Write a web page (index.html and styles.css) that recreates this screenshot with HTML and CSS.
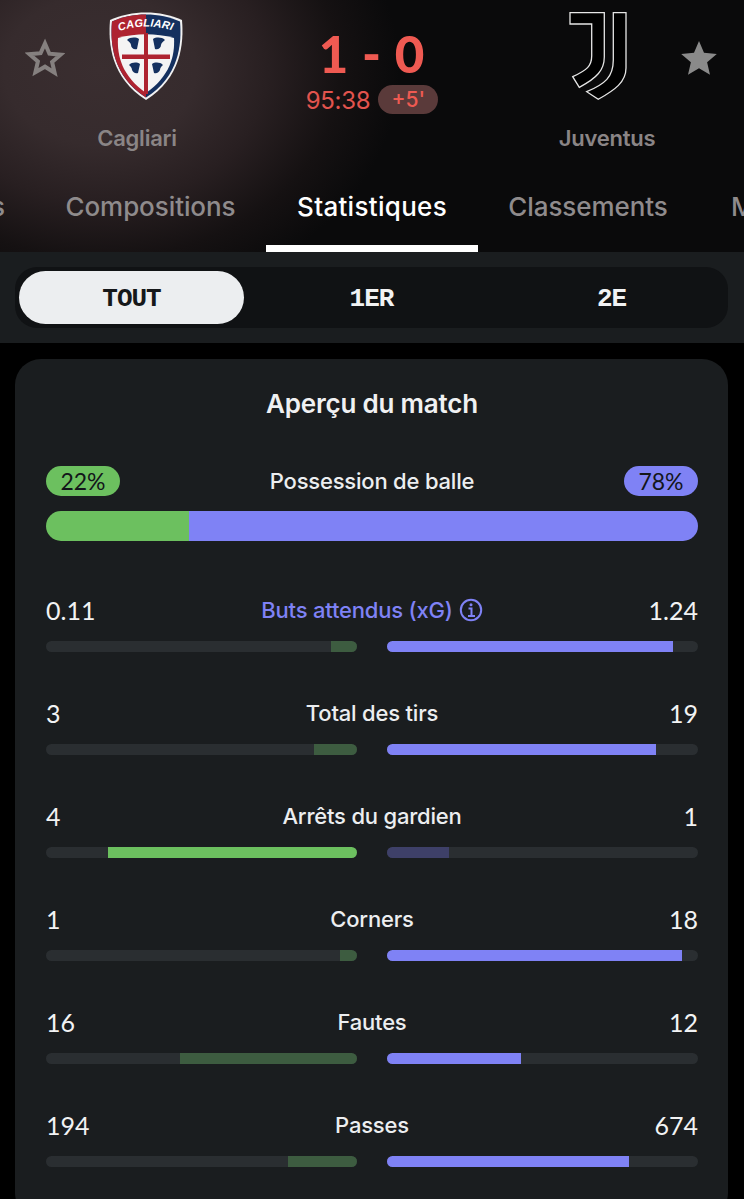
FILE: index.html
```html
<!DOCTYPE html>
<html lang="fr">
<head>
<meta charset="utf-8">
<title>Cagliari - Juventus</title>
<link rel="stylesheet" href="styles.css">
</head>
<body>
<header class="match">
  <div class="teams">
    <svg class="star star-off" viewBox="0 0 40 40"><path d="M20 5.500l4.400 10.200 11.100 1-8.400 7.300 2.500 10.800L20 28.700l-9.600 5.600 2.500-10.800-8.400-7.300 11.100-1z"/></svg>
    <div class="team">
      <svg class="crest" viewBox="-19 0 94 88">
        <defs>
          <clipPath id="lh"><rect x="0" y="0" width="37" height="88"/></clipPath>
          <path id="arc" d="M10 19 Q37 10 65 19"/>
        </defs>
        <path d="M1 8C12 3 24 .5 37 .5S62 3 73 8c2 24-1 58-36 80C2 66-1 32 1 8z" fill="#f2f2f2"/>
        <path d="M3 9.500C13 5 25 2.500 37 2.500S61 5 71 9.500c2 23-1 55-34 76C4 64.500 1 32.500 3 9.500z" fill="#14305f"/>
        <path d="M3 9.500C13 5 25 2.500 37 2.500S61 5 71 9.500c2 23-1 55-34 76C4 64.500 1 32.500 3 9.500z" fill="#ae2330" clip-path="url(#lh)"/>
        <path d="M9 26c18-5 38-5 56 0 1 18-4 38-28 55C13 64 8 44 9 26z" fill="#f4f4f4"/>
        <path d="M35 21h4v61h-4z" fill="#ae2330"/>
        <path d="M13 42.500h48v4.500H13z" fill="#ae2330"/>
        <g fill="#14305f">
          <path d="M18 28c3-3 9-3 12-1l-2 10c-3 1-6-1-6-4 0-2-2-3-4-5z"/>
          <path d="M56 28c-3-3-9-3-12-1l2 10c3 1 6-1 6-4 0-2 2-3 4-5z"/>
          <path d="M20 53c3-3 8-3 11-1l-2 9c-3 1-5-1-6-3 0-2-1-3-3-5z"/>
          <path d="M54 53c-3-3-8-3-11-1l2 9c3 1 5-1 6-3 0-2 1-3 3-5z"/>
        </g>
        <text class="crest-text"><textPath href="#arc" textLength="54">CAGLIARI</textPath></text>
      </svg>
      <span class="team-name">Cagliari</span>
    </div>
    <div class="score">
      <div class="score-main">1 - 0</div>
      <div class="clock"><span class="time">95:38</span><span class="added">+5'</span></div>
    </div>
    <div class="team">
      <svg class="crest" viewBox="0 0 94 88">
        <g fill="#000" stroke="#e6e6e6" stroke-width="1.300">
          <path d="M10 .7H44.300V45C44.300 58 37 66 19.300 75.300L12.700 64.700C27 58 31.700 54 31.700 44V12H10z"/>
          <path d="M53.300 .7H66V56C66 70 55 78 38.300 87.300L26.700 79.700C45 72 53.300 65 53.300 48z"/>
        </g>
      </svg>
      <span class="team-name">Juventus</span>
    </div>
    <svg class="star star-on" viewBox="0 0 40 40"><path d="M20 3l5 11.800 12.800 1.100-9.700 8.400 2.900 12.500L20 30.200 9 36.800l2.900-12.500-9.700-8.400L15 14.800z"/></svg>
  </div>
  <nav class="tabs">
    <span class="tab tab-first">Détails</span>
    <span class="tab">Compositions</span>
    <span class="tab tab-active">Statistiques</span>
    <span class="tab">Classements</span>
    <span class="tab tab-last">Médias</span>
  </nav>
</header>

<section class="periods">
  <div class="track">
    <span class="period period-active">TOUT</span>
    <span class="period">1ER</span>
    <span class="period">2E</span>
  </div>
</section>

<main class="card">
  <h2 class="card-title">Aperçu du match</h2>

  <div class="possession">
    <div class="poss-head">
      <span class="pill pill-green">22%</span>
      <span class="label">Possession de balle</span>
      <span class="pill pill-blue">78%</span>
    </div>
    <div class="poss-bar">
      <div class="poss-home" style="width:22%"></div>
      <div class="poss-away"></div>
    </div>
  </div>

  <div class="stat">
    <div class="stat-head"><span class="val">0.11</span><span class="label label-xg">Buts attendus (xG) <svg class="info" viewBox="0 0 24 24"><circle cx="12" cy="12" r="10.200"/><path d="M9.500 10.500H12.500V18M9 18H16" /><circle class="dot" cx="12" cy="6.800" r="1.500"/></svg></span><span class="val val-r">1.24</span></div>
    <div class="bars">
      <div class="bar bar-l"><i class="fill green dim" style="width:8.4%"></i></div>
      <div class="bar"><i class="fill blue" style="width:92%"></i></div>
    </div>
  </div>

  <div class="stat">
    <div class="stat-head"><span class="val">3</span><span class="label">Total des tirs</span><span class="val val-r">19</span></div>
    <div class="bars">
      <div class="bar bar-l"><i class="fill green dim" style="width:13.8%"></i></div>
      <div class="bar"><i class="fill blue" style="width:86.5%"></i></div>
    </div>
  </div>

  <div class="stat">
    <div class="stat-head"><span class="val">4</span><span class="label">Arrêts du gardien</span><span class="val val-r">1</span></div>
    <div class="bars">
      <div class="bar bar-l"><i class="fill green" style="width:80%"></i></div>
      <div class="bar"><i class="fill blue dim" style="width:20%"></i></div>
    </div>
  </div>

  <div class="stat">
    <div class="stat-head"><span class="val">1</span><span class="label">Corners</span><span class="val val-r">18</span></div>
    <div class="bars">
      <div class="bar bar-l"><i class="fill green dim" style="width:5.5%"></i></div>
      <div class="bar"><i class="fill blue" style="width:94.9%"></i></div>
    </div>
  </div>

  <div class="stat">
    <div class="stat-head"><span class="val">16</span><span class="label">Fautes</span><span class="val val-r">12</span></div>
    <div class="bars">
      <div class="bar bar-l"><i class="fill green dim" style="width:57%"></i></div>
      <div class="bar"><i class="fill blue" style="width:43%"></i></div>
    </div>
  </div>

  <div class="stat">
    <div class="stat-head"><span class="val">194</span><span class="label">Passes</span><span class="val val-r">674</span></div>
    <div class="bars">
      <div class="bar bar-l"><i class="fill green dim" style="width:22.2%"></i></div>
      <div class="bar"><i class="fill blue" style="width:77.8%"></i></div>
    </div>
  </div>
</main>
</body>
</html>
```

FILE: styles.css
```css
* { box-sizing: border-box; }
html, body { margin: 0; height: 1199px; overflow: hidden; background: #000; }
body { font-family: Inter, "Liberation Sans", sans-serif; color: #eceef0; }

.match {
  height: 252px;
  padding-top: 12px;
  display: flex;
  flex-direction: column;
  overflow: hidden;
  background: radial-gradient(ellipse 300px 235px at 100px 70px, #3a2e30 0%, #362b2d 32%, #281f21 56%, #151112 80%, rgba(10,10,11,0) 100%), #0a0a0b;
}
.teams {
  display: grid;
  grid-template-columns: 90px 94px 1fr 94px 90px;
  align-items: start;
  height: 166px;
  flex: none;
}
.star { width: 40px; height: 40px; justify-self: center; margin-top: 26px; }
.star-off path { fill: none; stroke: #85807f; stroke-width: 4; }
.star-on path { fill: #8a8a8a; }
.team { display: flex; flex-direction: column; align-items: center; }
.crest { width: 94px; height: 88px; display: block; }
.crest-text { font: italic 700 11px "Liberation Sans", sans-serif; fill: #fff; }
.team-name { margin-top: 22px; font-size: 22px; font-weight: 600; line-height: 32px; color: #8a8586; letter-spacing: -.25px; white-space: nowrap; }
.score { display: flex; flex-direction: column; align-items: center; }
.score-main { margin: 12px 0 0; font-family: Lato, sans-serif; font-size: 51px; font-weight: 900; line-height: 60px; color: #ef5a52; letter-spacing: .8px; }
.clock { display: flex; align-items: flex-start; gap: 8px; }
.time { padding-top: 2px; font-size: 24px; line-height: 30px; color: #e2544e; letter-spacing: -.3px; }
.added { width: 60px; height: 29px; margin-top: 1px; border-radius: 15px; background: #5a3a3a; color: #ee5a52; font-size: 21px; font-weight: 500; line-height: 29px; text-align: center; }

.tabs {
  display: grid;
  grid-template-columns: 145px 231px 212px 220px 145px;
  flex: 1;
  margin-left: -110px;
  white-space: nowrap;
}
.tab { font-size: 26px; font-weight: 500; line-height: 58px; color: #8f8b8c; text-align: center; letter-spacing: -.08px; }
.tab-first { text-align: right; padding-right: 30px; }
.tab-last { text-align: left; padding-left: 33px; }
.tab-active { color: #fff; letter-spacing: .3px; border-bottom: 7px solid #fff; }

.periods { height: 91px; background: #1a1d1f; padding: 15px 16px 0 15px; }
.track { display: grid; grid-template-columns: repeat(3, 225px); gap: 15px; height: 61px; padding: 4px; border-radius: 22px; background: #101214; }
.period { font-family: "Liberation Mono", monospace; font-size: 26px; font-weight: 700; line-height: 57px; height: 53px; text-align: center; color: #f1f2f3; letter-spacing: -1px; }
.period-active { background: #eceef0; color: #16181a; border-radius: 27px; }

.card {
  margin: 16px 16px 0 15px;
  height: 860px;
  padding: 27px 30px 0 31px;
  border-radius: 26px;
  background: #1a1d1f;
}
.card-title { margin: 0; font-size: 26px; font-weight: 600; line-height: 36px; text-align: center; color: #f0f1f2; letter-spacing: -.2px; }

.possession { margin-top: 44px; }
.poss-head, .stat-head { display: grid; grid-template-columns: 1fr auto 1fr; align-items: center; }
.label { font-size: 22px; font-weight: 500; line-height: 30px; color: #eceef0; letter-spacing: -.2px; }
.pill { width: 74px; height: 30px; border-radius: 15px; font-family: Lato, sans-serif; font-size: 23px; line-height: 30px; text-align: center; color: #13161a; }
.pill-blue { justify-self: end; }
.pill-green { background: #6cc05f; }
.pill-blue { background: #7f82f5; }
.poss-bar { display: flex; height: 30px; margin-top: 15px; border-radius: 15px; overflow: hidden; }
.poss-home { background: #6cc05f; }
.poss-away { flex: 1; background: #7f82f5; }

.stat { height: 103px; }
.possession + .stat { margin-top: 54px; }
.stat-head { height: 30px; }
.val { font-family: Lato, sans-serif; font-size: 25px; line-height: 30px; color: #f2f3f4; }
.val-r { text-align: right; }
.label-xg { display: flex; align-items: center; gap: 6px; color: #7f82f5; }
.info { width: 24px; height: 24px; fill: none; stroke: #7f82f5; stroke-width: 2; }
.info .dot { fill: #7f82f5; stroke: none; }
.bars { display: flex; gap: 30px; margin-top: 16px; }
.bar { flex: 1; display: flex; height: 11px; border-radius: 6px; overflow: hidden; background: #2a2e31; }
.bar-l { justify-content: flex-end; }
.fill { display: block; height: 100%; }
.green { background: #6cc05f; }
.blue { background: #7f82f5; }
.green.dim { background: #3d5c40; }
.blue.dim { background: #3e4068; }
```
